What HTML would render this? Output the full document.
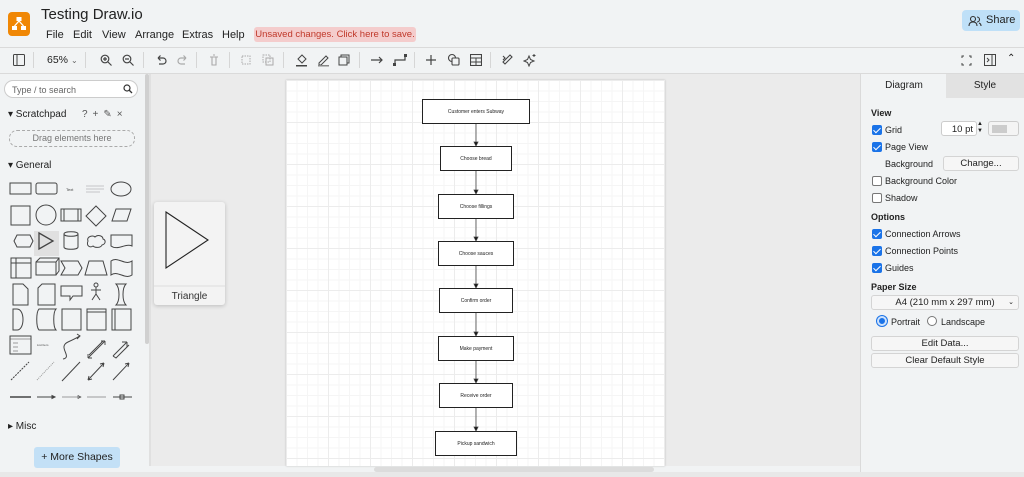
<!DOCTYPE html>
<html><head><meta charset="utf-8"><style>
*{box-sizing:border-box;margin:0;padding:0}
body{width:1024px;height:477px;overflow:hidden;background:#f1f3f4;font-family:"Liberation Sans",sans-serif;color:#222;position:relative}
.abs{position:absolute}
.menu span{position:absolute;top:0;font-size:11px}
.tb svg{position:absolute}
.sep{position:absolute;top:52px;width:1px;height:16px;background:#d6d6d6}
.rp{font-size:9px}
.cb{position:absolute;width:10px;height:10px;border-radius:2px;background:#1a73e8}
.cb::after{content:"";position:absolute;left:3px;top:1px;width:3px;height:6px;border:solid #fff;border-width:0 1.5px 1.5px 0;transform:rotate(45deg)}
.cbo{position:absolute;width:10px;height:10px;border-radius:2px;border:1px solid #777;background:#fff}
.btn{position:absolute;background:#f6f6f6;border:1px solid #d4d4d4;border-radius:3px;text-align:center;font-size:9.5px}
.box{position:absolute;border:1.3px solid #222;background:#fff;font-size:5px;display:flex;align-items:center;justify-content:center}
</style></head><body>
<!-- canvas (behind) -->
<div class="abs" style="left:151px;top:74px;width:709px;height:392px;background:#ebebeb"></div>
<div class="abs" style="left:286px;top:80px;width:379px;height:386px;background-color:#fff;background-image:linear-gradient(#ececec 1px,transparent 1px),linear-gradient(90deg,#ececec 1px,transparent 1px),linear-gradient(#f5f5f5 1px,transparent 1px),linear-gradient(90deg,#f5f5f5 1px,transparent 1px);background-size:42px 42px,42px 42px,10.5px 10.5px,10.5px 10.5px;box-shadow:0 0 2px rgba(0,0,0,.2)"></div>
<div class="abs" style="left:374px;top:467px;width:280px;height:5px;background:#dcdcdc;border-radius:3px"></div>
<div class="abs" style="left:0;top:472px;width:1024px;height:5px;background:#e8e8e8"></div>
<!-- header -->
<div class="abs" style="left:8px;top:12px;width:22px;height:24px;background:#f08705;border-radius:4px"></div>
<svg class="abs" style="left:8px;top:12px" width="22" height="24"><rect x="8.5" y="5" width="5" height="4" fill="#fff"/><rect x="4" y="14" width="5" height="4" fill="#fff"/><rect x="13" y="14" width="5" height="4" fill="#fff"/><path d="M11 9 L6.5 14 M11 9 L15.5 14" stroke="#fff" stroke-width="1.3"/></svg>
<div class="abs" style="left:41px;top:6px;font-size:15px">Testing Draw.io</div>
<div class="abs menu" style="left:0;top:29px;width:250px;height:14px">
<span style="left:46px">File</span><span style="left:73px">Edit</span><span style="left:102px">View</span><span style="left:135px">Arrange</span><span style="left:182px">Extras</span><span style="left:222px">Help</span></div>
<div class="abs" style="left:254px;top:27px;width:162px;height:15px;background:#f4cccc;border-radius:3px;color:#c0392b;font-size:9.5px;line-height:15px;text-align:center">Unsaved changes. Click here to save.</div>
<div class="abs" style="left:962px;top:10px;width:58px;height:21px;background:#bfe0f8;border-radius:4px;font-size:11px;line-height:21px;padding-left:24px">Share</div>
<svg class="abs" style="left:968px;top:15px" width="14" height="12"><circle cx="5" cy="4" r="2.5" fill="none" stroke="#333" stroke-width="1.1"/><path d="M1 11c0-3 2-4 4-4s4 1 4 4M9 2a2.5 2.5 0 0 1 0 5M11 8c1.5.5 2 2 2 3" fill="none" stroke="#333" stroke-width="1.1"/></svg>
<div class="abs" style="left:0;top:47px;width:1024px;height:1px;background:#dadada"></div>
<!-- toolbar -->
<div class="tb">
<svg style="left:13px;top:54px" width="12" height="12"><rect x=".5" y=".5" width="11" height="11" rx="1" fill="none" stroke="#444"/><path d="M4 1v10" stroke="#444"/></svg>
<div class="sep" style="left:33px"></div>
<div class="abs" style="left:47px;top:54px;font-size:10.5px">65% <span style="font-size:8px;color:#666">&#8964;</span></div>
<div class="sep" style="left:85px"></div>
<svg style="left:100px;top:54px" width="12" height="12"><circle cx="5" cy="5" r="3.8" fill="none" stroke="#444" stroke-width="1.2"/><path d="M8 8l3.5 3.5M3 5h4M5 3v4" stroke="#444" stroke-width="1.2"/></svg>
<svg style="left:122px;top:54px" width="12" height="12"><circle cx="5" cy="5" r="3.8" fill="none" stroke="#444" stroke-width="1.2"/><path d="M8 8l3.5 3.5M3 5h4" stroke="#444" stroke-width="1.2"/></svg>
<div class="sep" style="left:143px"></div>
<svg style="left:155px;top:54px" width="12" height="12"><path d="M3 4h5a3 3 0 0 1 0 6H4M3 4l2.5-2.5M3 4l2.5 2.5" fill="none" stroke="#444" stroke-width="1.2"/></svg>
<svg style="left:177px;top:54px" width="12" height="12"><path d="M9 4H4a3 3 0 0 0 0 6h4M9 4L6.5 1.5M9 4L6.5 6.5" fill="none" stroke="#aaa" stroke-width="1.2"/></svg>
<div class="sep" style="left:196px"></div>
<svg style="left:208px;top:54px" width="12" height="12"><path d="M2 3h8M4 3v8h4V3M5 1h2" fill="none" stroke="#aaa" stroke-width="1.1"/></svg>
<div class="sep" style="left:229px"></div>
<svg style="left:240px;top:54px" width="12" height="12"><rect x="2" y="2" width="8" height="8" fill="none" stroke="#aaa" stroke-dasharray="1.5 1"/></svg>
<svg style="left:262px;top:54px" width="12" height="12"><rect x="1" y="1" width="7" height="7" fill="none" stroke="#aaa" stroke-dasharray="1.5 1"/><rect x="4" y="4" width="7" height="7" fill="none" stroke="#aaa"/></svg>
<div class="sep" style="left:283px"></div>
<svg style="left:295px;top:53px" width="13" height="14"><path d="M3 6l4-4 4 4-4 4z" fill="none" stroke="#444"/><rect x="1" y="12" width="11" height="1.5" fill="#444"/></svg>
<svg style="left:317px;top:53px" width="13" height="14"><path d="M2 10l7-7 2 2-7 7H2z" fill="none" stroke="#444"/><rect x="1" y="12" width="11" height="1.5" fill="#888"/></svg>
<svg style="left:338px;top:54px" width="12" height="12"><rect x="1" y="3" width="8" height="8" fill="none" stroke="#444"/><path d="M3 3V1h8v8H9" fill="none" stroke="#444"/></svg>
<div class="sep" style="left:359px"></div>
<svg style="left:370px;top:55px" width="14" height="10"><path d="M1 5h11M9 2l3 3-3 3" fill="none" stroke="#444" stroke-width="1.2"/></svg>
<svg style="left:393px;top:53px" width="14" height="14"><path d="M2 12V7h10V2" fill="none" stroke="#444" stroke-width="1.2"/><rect x="0" y="10" width="3" height="3" fill="#444"/><rect x="11" y="1" width="3" height="3" fill="#444"/></svg>
<div class="sep" style="left:414px"></div>
<svg style="left:425px;top:54px" width="12" height="12"><path d="M6 1v10M1 6h10" stroke="#444" stroke-width="1.2"/></svg>
<svg style="left:447px;top:53px" width="13" height="13"><circle cx="5" cy="5" r="3.5" fill="none" stroke="#444" stroke-width="1.1"/><rect x="5" y="5" width="7" height="7" rx="1" fill="#f1f3f4" stroke="#444" stroke-width="1.1"/></svg>
<svg style="left:470px;top:54px" width="12" height="12"><rect x=".5" y=".5" width="11" height="11" fill="none" stroke="#444" stroke-width="1.1"/><path d="M1 4h10M1 8h10M6 4v8" stroke="#444"/></svg>
<div class="sep" style="left:490px"></div>
<svg style="left:501px;top:53px" width="14" height="14"><path d="M2 9l7-7 2 2-7 7zM2 3l2 2-2 2" fill="none" stroke="#444" stroke-width="1.1"/></svg>
<svg style="left:523px;top:53px" width="14" height="14"><path d="M6 3l1.5 3.5L11 8l-3.5 1.5L6 13l-1.5-3.5L1 8l3.5-1.5z" fill="none" stroke="#444"/><path d="M11 1v3M9.5 2.5h3" stroke="#444"/></svg>
<svg style="left:961px;top:55px" width="11" height="11"><path d="M1 3V1h2M8 1h2v2M10 8v2H8M3 10H1V8" fill="none" stroke="#444"/></svg>
<svg style="left:984px;top:54px" width="12" height="12"><rect x=".5" y=".5" width="11" height="11" fill="none" stroke="#444"/><path d="M8 1v10M3 4l2 2-2 2" fill="none" stroke="#444"/></svg>
<div class="abs" style="left:1007px;top:53px;font-size:10px">&#8963;</div>
</div>
<div class="abs" style="left:0;top:73px;width:1024px;height:1px;background:#dadada"></div>
<!-- left panel -->
<div class="abs" style="left:149px;top:74px;width:2px;height:392px;background:#e0e0e0"></div>
<div class="abs" style="left:145px;top:74px;width:4px;height:270px;background:#d0d0d0;border-radius:2px"></div>
<div class="abs" style="left:4px;top:80px;width:134px;height:18px;background:#fff;border:1px solid #ccc;border-radius:9px;font-size:9px;color:#666;padding:4px 0 0 7px">Type / to search</div>
<svg class="abs" style="left:123px;top:84px" width="10" height="10"><circle cx="4" cy="4" r="3" fill="none" stroke="#333" stroke-width="1.2"/><path d="M6 6l3 3" stroke="#333" stroke-width="1.3"/></svg>
<div class="abs" style="left:8px;top:109px;font-size:10px">▾ Scratchpad</div>
<div class="abs" style="left:82px;top:109px;font-size:10px;color:#555;letter-spacing:5px">?+✎×</div>
<div class="abs" style="left:9px;top:130px;width:126px;height:17px;border:1.3px dashed #aaa;border-radius:8px;font-size:9px;color:#777;text-align:center;line-height:15px">Drag elements here</div>
<div class="abs" style="left:8px;top:160px;font-size:10px">▾ General</div>
<svg class="abs" style="left:0;top:176px" width="145" height="230" fill="none" stroke="#444" stroke-width="1">
<rect x="10" y="7" width="21" height="11"/><rect x="36" y="7" width="21" height="11" rx="2"/><text x="66" y="15" font-size="4" fill="#444" stroke="none">Text</text><path d="M86 10h18M86 13h18M86 16h14" stroke="#999" stroke-width=".6"/><ellipse cx="121" cy="13" rx="10" ry="7"/>
<rect x="11" y="30" width="19" height="19"/><circle cx="46" cy="39" r="10"/><rect x="61" y="33" width="20" height="12"/><path d="M64 33v12M78 33v12"/><path d="M96 30l10 10-10 10-10-10z"/><path d="M116 33h15l-4 12h-15z"/>
<path d="M14 65l3-6h13l3 6-3 6H17z"/><rect x="34" y="55" width="25" height="25" fill="#e0e0e0" stroke="none"/><path d="M39 57l14 8-14 8z" stroke-width="1.3"/><path d="M64 58v13c0 3 14 3 14 0V58c0-3-14-3-14 0c0 3 14 3 14 0"/><path d="M88 65c-2-5 6-6 7-4 3-3 8-1 8 2 3 1 3 5-1 6-1 3-7 3-9 1-3 2-7 0-5-5z"/><path d="M111 59h21v11c-7-3-14 5-21 0z"/>
<rect x="11" y="82" width="20" height="20"/><path d="M16 82v20M11 87h20"/><path d="M36 86h20v13H36zM36 86l4-4h19v13l-3 4M56 86l3-4"/><path d="M61 85h17l4 7-4 7H61l4-7z"/><path d="M89 85h14l4 14H85z"/><path d="M111 85c7-5 14 5 21 0v14c-7 5-14-5-21 0z"/>
<path d="M13 108h10l5 5v16H13z"/><path d="M42 108h13v21H38v-17z"/><path d="M61 110h21v10h-9l-3 4v-4h-9z"/><circle cx="96" cy="109" r="2"/><path d="M96 111v7M91 114h10M96 118l-4 6M96 118l4 6"/><path d="M116 108h10c-4 4-4 17 0 21h-10c4-4 4-17 0-21z"/>
<path d="M13 133h4c8 0 8 21 0 21h-4z"/><path d="M39 133h17c-3 3-3 18 0 21H39c-3-3-3-18 0-21z"/><rect x="62" y="133" width="19" height="21"/><rect x="87" y="133" width="19" height="21"/><path d="M87 136h19"/><rect x="112" y="133" width="19" height="21"/><path d="M115 133v21"/>
<rect x="10" y="160" width="21" height="18"/><path d="M10 163h21M13 167h5M13 171h5M13 175h5" stroke-width=".6"/><text x="37" y="170" font-size="3" fill="#444" stroke="none">List Item</text><path d="M63 183c10-2-6-12 5-17s8-4 12-6M77 158l3 2-3 3"/><path d="M88 182l17-17M88 182v-4M88 182h4M105 165v4M105 165h-4M89 179l14-14" stroke-width=".9"/><path d="M113 180l14-14M127 166h-5M127 166v5M113 180l3 2 13-13"/>
<path d="M11 204l18-18" stroke-dasharray="2 1"/><path d="M37 204l17-18" stroke-dasharray="1 1" stroke="#999"/><path d="M62 205l18-19"/><path d="M88 204l16-17M88 204l1-4M88 204l4-1M104 187l-4 1M104 187l-1 4"/><path d="M113 204l16-17M129 187l-4 1M129 187l-1 4"/>
<path d="M10 221h21" stroke-width="1.5"/><path d="M37 221h18M55 221l-3-1.5v3z"/><path d="M62 221h19M81 221l-3-1.5v3z" stroke-width=".6"/><path d="M87 221h19" stroke-width=".6"/><path d="M113 221h19M120 219h4v4h-4z"/>
</svg>
<div class="abs" style="left:8px;top:421px;font-size:10px">▸ Misc</div>
<div class="abs" style="left:34px;top:447px;width:86px;height:21px;background:#c3e0f6;border-radius:3px;font-size:10.5px;text-align:center;line-height:21px">+ More Shapes</div>
<!-- tooltip -->
<div class="abs" style="left:154px;top:202px;width:71px;height:103px;background:#f3f3f3;border-radius:3px;box-shadow:0 1px 4px rgba(0,0,0,.2)"></div>
<svg class="abs" style="left:154px;top:202px" width="71" height="103"><path d="M12 10l42 28-42 28z" fill="none" stroke="#222" stroke-width="1.1"/><path d="M0 84h71" stroke="#ddd"/><text x="35.5" y="97" font-size="10" text-anchor="middle" fill="#333" font-family="Liberation Sans">Triangle</text></svg>
<!-- diagram -->
<svg class="abs" style="left:0;top:0" width="1024" height="477"><g stroke="#444" stroke-width=".8" fill="#111">
<path d="M476 123v22M476 171v22M476 218v22M476 266v21M476 313v22M476 360v22M476 408v22"/>
<path d="M474 142l2 4 2-4zM474 190l2 4 2-4zM474 237l2 4 2-4zM474 284l2 4 2-4zM474 332l2 4 2-4zM474 379l2 4 2-4zM474 427l2 4 2-4z"/></g></svg>
<div class="box" style="left:422px;top:99px;width:108px;height:25px">Customer enters Subway</div>
<div class="box" style="left:440px;top:146px;width:72px;height:25px">Choose bread</div>
<div class="box" style="left:438px;top:194px;width:76px;height:25px">Choose fillings</div>
<div class="box" style="left:438px;top:241px;width:76px;height:25px">Choose sauces</div>
<div class="box" style="left:439px;top:288px;width:74px;height:25px">Confirm order</div>
<div class="box" style="left:438px;top:336px;width:76px;height:25px">Make payment</div>
<div class="box" style="left:439px;top:383px;width:74px;height:25px">Receive order</div>
<div class="box" style="left:435px;top:431px;width:82px;height:25px">Pickup sandwich</div>
<!-- right panel -->
<div class="abs" style="left:860px;top:74px;width:1px;height:398px;background:#dadada"></div>
<div class="abs" style="left:861px;top:74px;width:86px;height:24px;font-size:10px;text-align:center;line-height:24px">Diagram</div>
<div class="abs" style="left:946px;top:74px;width:78px;height:24px;background:#e2e2e2;font-size:10px;text-align:center;line-height:24px">Style</div>
<div class="abs rp" style="left:871px;top:108px;font-weight:bold">View</div>
<div class="cb" style="left:872px;top:125px"></div><div class="abs rp" style="left:885px;top:125px">Grid</div>
<div class="abs" style="left:941px;top:121px;width:36px;height:15px;background:#fff;border:1px solid #ccc;border-radius:3px;font-size:9.5px;text-align:right;padding:2px 3px 0 0">10 pt</div>
<div class="abs" style="left:977px;top:121px;font-size:6px;line-height:7px">▲<br>▼</div>
<div class="abs" style="left:988px;top:121px;width:31px;height:15px;background:#f4f4f4;border:1px solid #ccc;border-radius:3px"><div style="margin:3px;width:15px;height:8px;background:#ccc"></div></div>
<div class="cb" style="left:872px;top:142px"></div><div class="abs rp" style="left:885px;top:142px">Page View</div>
<div class="abs rp" style="left:885px;top:159px">Background</div>
<div class="btn" style="left:943px;top:156px;width:76px;height:15px;line-height:13px">Change...</div>
<div class="cbo" style="left:872px;top:176px"></div><div class="abs rp" style="left:885px;top:176px">Background Color</div>
<div class="cbo" style="left:872px;top:193px"></div><div class="abs rp" style="left:885px;top:193px">Shadow</div>
<div class="abs rp" style="left:871px;top:212px;font-weight:bold">Options</div>
<div class="cb" style="left:872px;top:229px"></div><div class="abs rp" style="left:885px;top:229px">Connection Arrows</div>
<div class="cb" style="left:872px;top:246px"></div><div class="abs rp" style="left:885px;top:246px">Connection Points</div>
<div class="cb" style="left:872px;top:263px"></div><div class="abs rp" style="left:885px;top:263px">Guides</div>
<div class="abs rp" style="left:871px;top:282px;font-weight:bold">Paper Size</div>
<div class="btn" style="left:871px;top:295px;width:148px;height:15px;line-height:13px">A4 (210 mm x 297 mm)<span style="position:absolute;right:4px;font-size:7px">&#8964;</span></div>
<div class="abs" style="left:877px;top:316px;width:10px;height:10px;border-radius:50%;background:#1a73e8;border:2.5px solid #cfe2fb;box-shadow:0 0 0 1px #1a73e8"></div>
<div class="abs rp" style="left:891px;top:317px">Portrait</div>
<div class="abs" style="left:927px;top:316px;width:10px;height:10px;border-radius:50%;border:1px solid #777;background:#fff"></div>
<div class="abs rp" style="left:941px;top:317px">Landscape</div>
<div class="btn" style="left:871px;top:336px;width:148px;height:15px;line-height:13px">Edit Data...</div>
<div class="btn" style="left:871px;top:353px;width:148px;height:15px;line-height:13px">Clear Default Style</div>
</body></html>
